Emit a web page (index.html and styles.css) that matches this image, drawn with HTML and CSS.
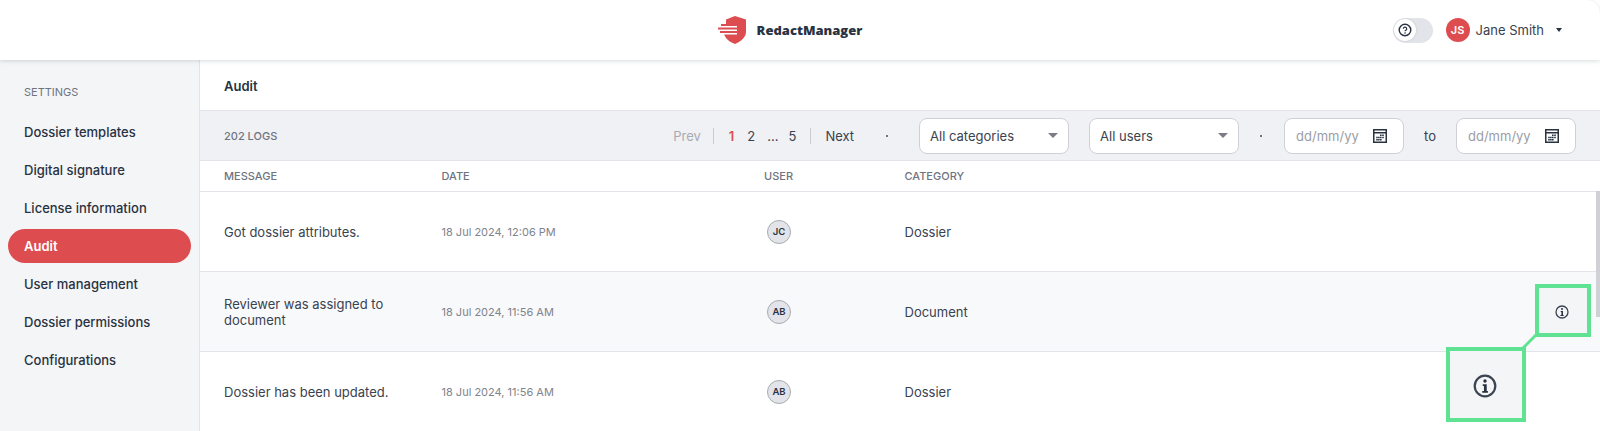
FILE: index.html
```html
<!DOCTYPE html>
<html lang="en">
<head>
<meta charset="utf-8">
<title>Audit</title>
<link rel="stylesheet" href="styles.css">
</head>
<body>
<header class="topbar">
  <div class="brand">
    <svg class="logo" width="28" height="28" viewBox="0 0 28 28"><path fill="#dd4d50" d="M8 3.500 17 0l11 3.500V16c0 5-5 9.500-11 12-4-1.500-7-3.500-9-6l-2-3.500h13V17H2v-2h17v-1.500H0v-2h19V10H3V8h5z"/></svg>
    <span class="brand-name">RedactManager</span>
  </div>
  <div class="user-area">
    <div class="toggle"><span class="knob"><svg width="14" height="14" viewBox="0 0 14 14"><circle cx="7" cy="7" r="5.800" fill="none" stroke="#283241" stroke-width="1.400"/><path d="M5.300 5.700A1.700 1.700 0 1 1 7.700 7.300c-.5.300-.7.500-.7 1" fill="none" stroke="#283241" stroke-width="1.200"/><circle cx="7" cy="10" r=".8" fill="#283241"/></svg></span></div>
    <span class="avatar-main">JS</span>
    <span class="user-name">Jane Smith</span>
    <span class="caret"></span>
  </div>
</header>
<div class="layout">
  <nav class="sidebar">
    <div class="side-title">SETTINGS</div>
    <a class="side-item">Dossier templates</a>
    <a class="side-item">Digital signature</a>
    <a class="side-item">License information</a>
    <a class="side-item active">Audit</a>
    <a class="side-item">User management</a>
    <a class="side-item">Dossier permissions</a>
    <a class="side-item">Configurations</a>
  </nav>
  <main class="content">
    <div class="page-title">Audit</div>
    <div class="toolbar">
      <span class="logs">202 LOGS</span>
      <div class="filters">
        <div class="pager">
          <span class="muted">Prev</span>
          <i class="sep sep-first"></i>
          <span class="current">1</span>
          <span>2</span>
          <span class="ellipsis">...</span>
          <span>5</span>
          <i class="sep sep-last"></i>
          <span>Next</span>
        </div>
        <i class="dot dot-a"></i>
        <div class="select select-a"><span>All categories</span><b class="arrow"></b></div>
        <div class="select select-b"><span>All users</span><b class="arrow"></b></div>
        <i class="dot dot-b"></i>
        <div class="date"><span>dd/mm/yy</span><svg class="cal" width="14" height="14" viewBox="0 0 14 14"><path fill="#283241" fill-rule="evenodd" d="M0 0h14v14H0zM1.500 1.500v1.500h11V1.500zM1.500 4.500v8h11v-8z"/><path fill="#283241" d="M7 5.500h1.600V7H7zM9.200 5.500h1.600V7H9.200zM3.200 7.700h1.600v1.500H3.200zM5.100 7.700h1.600v1.500H5.100zM7 7.700h1.600v1.500H7zM9.200 7.700h1.600v1.500H9.200zM3.200 9.900h1.600v1.500H3.200zM5.100 9.900h1.600v1.500H5.100zM7 9.900h1.600v1.500H7z"/></svg></div>
        <span class="to">to</span>
        <div class="date"><span>dd/mm/yy</span><svg class="cal" width="14" height="14" viewBox="0 0 14 14"><path fill="#283241" fill-rule="evenodd" d="M0 0h14v14H0zM1.500 1.500v1.500h11V1.500zM1.500 4.500v8h11v-8z"/><path fill="#283241" d="M7 5.500h1.600V7H7zM9.200 5.500h1.600V7H9.200zM3.200 7.700h1.600v1.500H3.200zM5.100 7.700h1.600v1.500H5.100zM7 7.700h1.600v1.500H7zM9.200 7.700h1.600v1.500H9.200zM3.200 9.900h1.600v1.500H3.200zM5.100 9.900h1.600v1.500H5.100zM7 9.900h1.600v1.500H7z"/></svg></div>
      </div>
    </div>
    <div class="thead row-grid">
      <span>MESSAGE</span><span>DATE</span><span>USER</span><span>CATEGORY</span>
    </div>
    <div class="row row-grid">
      <span class="msg">Got dossier attributes.</span>
      <span class="when">18 Jul 2024, 12:06 PM</span>
      <span class="who"><b class="initials">JC</b></span>
      <span class="cat">Dossier</span>
    </div>
    <div class="row row-grid hover">
      <span class="msg">Reviewer was assigned to document</span>
      <span class="when">18 Jul 2024, 11:56 AM</span>
      <span class="who"><b class="initials">AB</b></span>
      <span class="cat">Document</span>
    </div>
    <div class="row row-grid">
      <span class="msg">Dossier has been updated.</span>
      <span class="when">18 Jul 2024, 11:56 AM</span>
      <span class="who"><b class="initials">AB</b></span>
      <span class="cat">Dossier</span>
    </div>
    <div class="scroll-thumb"></div>
  </main>
</div>
<svg class="connector" width="16" height="16" viewBox="0 0 16 16"><path d="M15 1 1 15" stroke="#5fe393" stroke-width="3"/></svg>
<div class="callout callout-small"><svg class="info" width="14" height="14" viewBox="0 0 14 14"><circle cx="7" cy="7" r="6" fill="none" stroke="#3b4452" stroke-width="1.300"/><circle cx="7" cy="4.100" r="1" fill="#283241"/><path fill="#283241" d="M5.700 6h2.300v3.900h.7v1H5.400v-1h1V7h-.7z"/></svg></div>
<div class="callout callout-large"><svg class="info" width="24" height="24" viewBox="0 0 14 14"><circle cx="7" cy="7" r="6" fill="none" stroke="#3b4452" stroke-width="1.300"/><circle cx="7" cy="4.100" r="1" fill="#283241"/><path fill="#283241" d="M5.700 6h2.300v3.900h.7v1H5.400v-1h1V7h-.7z"/></svg></div>
</body>
</html>
```
FILE: styles.css
```css
* { box-sizing: border-box; }
html, body { margin: 0; height: 431px; overflow: hidden; }
body { position: relative; font-family: Inter, "Liberation Sans", sans-serif; font-size: 13px; color: #283241; background: #fff; }
.topbar { height: 60px; background: #fff; display: flex; align-items: center; justify-content: center; position: relative; z-index: 2; box-shadow: 0 1px 4px rgba(40,50,65,.18); border-top-right-radius: 14px; }
.brand { display: flex; align-items: center; gap: 11px; padding-right: 20px; }
.logo { display: block; }
.brand-name { font-family: "Open Sans", sans-serif; font-weight: 800; font-size: 13px; color: #283241; }
.user-area { position: absolute; right: 38px; top: 18px; display: flex; align-items: center; height: 24px; }
.toggle { width: 40px; height: 25px; border-radius: 13px; background: #e2e4e9; padding: 1.500px; display: flex; }
.knob { width: 22px; height: 22px; border-radius: 50%; background: #fff; box-shadow: 0 0 2px rgba(40,50,65,.2); display: flex; align-items: center; justify-content: center; }
.avatar-main { width: 24px; height: 24px; border-radius: 50%; margin-left: 13px; background: #dd4d50; color: #fff; font-size: 11px; font-weight: 600; display: flex; align-items: center; justify-content: center; }
.user-name { margin-left: 6px; font-size: 13px; color: #39424f; }
.caret { margin-left: 12px; border: 3.500px solid transparent; border-top: 4px solid #283241; border-bottom: 0; }
.layout { display: flex; height: 371px; }
.sidebar { width: 200px; flex: none; background: #f4f5f7; border-right: 1px solid #e2e4e9; padding: 25px 8px 0; }
.side-title { font-size: 11px; color: #6f7480; padding-left: 16px; height: 14px; line-height: 14px; margin-bottom: 16px; }
.side-item { display: flex; align-items: center; height: 34px; margin-bottom: 4px; padding-left: 16px; border-radius: 17px; font-size: 13px; font-weight: 500; color: #283241; }
.side-item.active { background: #dd4d50; color: #fff; font-weight: 600; }
.content { flex: 1; min-width: 0; position: relative; }
.page-title { height: 50px; display: flex; align-items: center; padding-left: 24px; padding-top: 2px; font-weight: 600; font-size: 13px; }
.toolbar { height: 51px; background: #f0f1f4; border-top: 1px solid #e2e4e9; border-bottom: 1px solid #e2e4e9; display: flex; align-items: center; justify-content: space-between; padding: 0 24px; }
.logs { font-size: 11px; color: #6f7480; font-weight: 500; }
.filters { display: flex; align-items: center; }
.pager { display: flex; align-items: center; font-size: 13px; gap: 13px; color: #39424f; }
.muted { color: #a8abb3; }
.current { color: #dd4d50; font-weight: 600; }
.ellipsis { margin: 0 -3px 0 -1px; }
.sep { width: 1px; height: 16px; background: #c9ccd3; }
.sep-first { margin: 0 2px 0 -1px; }
.sep-last { margin: 0 1px; }
.dot { width: 2px; height: 2px; border-radius: 50%; background: #444c5a; }
.dot-a { margin: 0 31px 0 32px; }
.dot-b { margin: 0 22px 0 21px; }
.select, .date { height: 36px; background: #fff; border: 1px solid #cfd1d7; border-radius: 8px; display: flex; align-items: center; justify-content: space-between; color: #39424f; }
.select { padding: 0 10px; }
.select-a { width: 150px; margin-right: 20px; }
.select-b { width: 150px; }
.arrow { border: 5px solid transparent; border-top: 5px solid #7a7d84; border-bottom: 0; }
.date { width: 120px; padding: 0 11px; color: #9a9da5; }
.to { margin: 0 20px; color: #39424f; }
.cal { display: block; margin-right: 5px; }
.row-grid { display: grid; grid-template-columns: 217.500px 322.500px 140.500px 1fr; align-items: center; padding-left: 24px; }
.thead { height: 31px; border-bottom: 1px solid #e2e4e9; font-size: 11px; color: #6f7480; font-weight: 500; }
.row { height: 80px; border-bottom: 1px solid #e2e4e9; color: #39424f; }
.hover { background: #f8f9fb; }
.msg { max-width: 180px; line-height: 16px; }
.when { font-size: 11px; color: #7f838c; }
.who { display: flex; padding-left: 3px; }
.initials { width: 24px; height: 24px; border-radius: 50%; background: #e2e4e9; border: 1px solid #a8abb3; display: flex; align-items: center; justify-content: center; font-size: 9.500px; font-weight: 600; color: #283241; }
.scroll-thumb { position: absolute; right: 0; top: 131px; width: 4px; height: 126px; background: #cfd1d7; }
.callout { position: absolute; z-index: 3; background: #f4f5f7; border: 4px solid #5fe393; display: flex; align-items: center; justify-content: center; }
.callout-small { left: 1535px; top: 284px; width: 56px; height: 53px; padding: 2px 2px 0 0; }
.callout-large { left: 1446px; top: 347px; width: 80px; height: 75px; padding: 2px 2px 0 0; }
.connector { position: absolute; z-index: 3; left: 1522px; top: 333px; }
.info { display: block; }
```
